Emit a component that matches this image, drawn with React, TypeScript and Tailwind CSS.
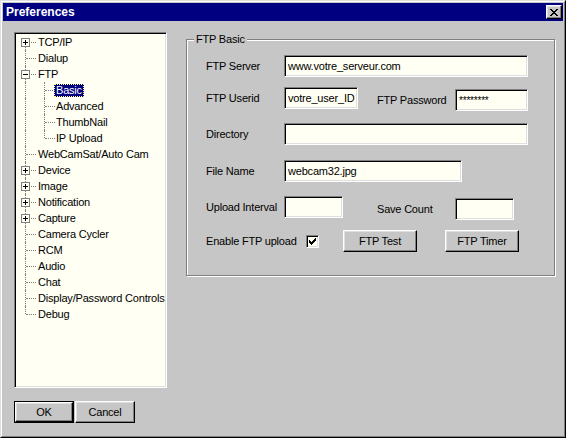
import React from 'react';

type TreeRow = {
  label: string;
  level: 0 | 1;
  box?: '+' | '-';
  first?: boolean;
  last?: boolean;
  lastChild?: boolean;
  selected?: boolean;
};

const rows: TreeRow[] = [
  { label: 'TCP/IP', level: 0, box: '+', first: true },
  { label: 'Dialup', level: 0 },
  { label: 'FTP', level: 0, box: '-' },
  { label: 'Basic', level: 1, selected: true },
  { label: 'Advanced', level: 1 },
  { label: 'ThumbNail', level: 1 },
  { label: 'IP Upload', level: 1, lastChild: true },
  { label: 'WebCamSat/Auto Cam', level: 0 },
  { label: 'Device', level: 0, box: '+' },
  { label: 'Image', level: 0, box: '+' },
  { label: 'Notification', level: 0, box: '+' },
  { label: 'Capture', level: 0, box: '+' },
  { label: 'Camera Cycler', level: 0 },
  { label: 'RCM', level: 0 },
  { label: 'Audio', level: 0 },
  { label: 'Chat', level: 0 },
  { label: 'Display/Password Controls', level: 0 },
  { label: 'Debug', level: 0, last: true },
];

const sunken =
  'border border-t-[#808080] border-l-[#808080] border-r-white border-b-white shadow-[inset_1px_1px_0_#000,inset_-1px_-1px_0_#dfdfdf] bg-[#fffff3]';

const raised =
  'border border-t-white border-l-white border-r-black border-b-black shadow-[inset_-1px_-1px_0_#808080,inset_1px_1px_0_#dfdfdf] bg-[#c6c6c6]';

function Row({ row }: { row: TreeRow }) {
  return (
    <div className={`relative h-[16px] flex items-center ${row.level === 0 ? 'pl-[20px]' : 'pl-[38px]'}`}>
      {/* trunk line */}
      {row.level === 0 ? (
        <span
          className={`absolute left-[9px] border-l border-dotted border-[#808080] ${
            row.first ? 'top-[8px] bottom-0' : row.last ? 'top-0 h-[8px]' : 'top-0 bottom-0'
          }`}
        />
      ) : (
        <span className="absolute left-[9px] top-0 bottom-0 border-l border-dotted border-[#808080]" />
      )}
      {row.level === 1 && (
        <span
          className={`absolute left-[28px] border-l border-dotted border-[#808080] ${
            row.lastChild ? 'top-0 h-[8px]' : 'top-0 bottom-0'
          }`}
        />
      )}
      {/* branch */}
      <span
        className={`absolute top-[8px] w-[10px] border-t border-dotted border-[#808080] ${
          row.level === 0 ? 'left-[10px]' : 'left-[29px]'
        }`}
      />
      {row.box && (
        <span className="absolute left-[5px] top-[4px] w-[9px] h-[9px] border border-[#808080] bg-[#fffff3] flex items-center justify-center">
          <span className="relative w-[5px] h-[5px]">
            <span className="absolute left-0 top-[2px] w-[5px] h-px bg-black" />
            {row.box === '+' && <span className="absolute left-[2px] top-0 w-px h-[5px] bg-black" />}
          </span>
        </span>
      )}
      <span
        className={`px-[2px] h-[13px] leading-[13px] whitespace-nowrap ${
          row.selected ? 'bg-[#000080] text-white outline outline-1 outline-dotted outline-[#ffff80] -outline-offset-1' : ''
        }`}
      >
        {row.label}
      </span>
    </div>
  );
}

function Field({ w, value, pad }: { w: string; value?: string; pad?: string }) {
  return (
    <div className={`${sunken} ${w} h-[22px] flex items-center pl-[3px] whitespace-nowrap overflow-hidden ${pad ?? ''}`}>
      {value}
    </div>
  );
}

function Button({ w, children, isDefault }: { w: string; children: React.ReactNode; isDefault?: boolean }) {
  if (isDefault) {
    return (
      <div className={`${w} h-[22px] border border-black flex`}>
        <div className={`${raised} flex-1 flex items-center justify-center`}>{children}</div>
      </div>
    );
  }
  return <div className={`${raised} ${w} h-[22px] flex items-center justify-center`}>{children}</div>;
}

export default function App() {
  return (
    <div className="w-[566px] h-[438px] border border-t-[#dfdfdf] border-l-[#dfdfdf] border-r-black border-b-black bg-[#c6c6c6] font-['Liberation_Sans',Arial,sans-serif] text-[11px] tracking-[-0.2px] text-black select-none">
      <div className="h-full border border-t-white border-l-white border-r-[#808080] border-b-[#808080] p-px flex flex-col">
        {/* caption */}
        <div className="h-[18px] bg-[#000080] flex items-center justify-between pl-[3px] pr-[1px]">
          <span className="text-white font-bold text-[12px] tracking-normal">Preferences</span>
          <div className={`${raised} w-[16px] h-[14px] flex items-center justify-center`}>
            <svg width="8" height="7" viewBox="0 0 8 7" shapeRendering="crispEdges">
              <path d="M0 0h2v1h1v1h2V1h1V0h2v1H7v1H6v1H5v1h1v1h1v1h1v1H6V6H5V5H3v1H2v1H0V6h1V5h1V4h1V3H2V2H1V1H0z" fill="#000" />
            </svg>
          </div>
        </div>

        <div className="flex-1 flex">
          {/* left column */}
          <div className="pl-[11px] pt-[11px] flex flex-col">
            <div className={`${sunken} w-[153px] h-[356px] p-px overflow-hidden`}>
              {rows.map((r) => (
                <Row key={r.label} row={r} />
              ))}
            </div>
            <div className="mt-[13px] flex gap-px">
              <Button w="w-[60px]" isDefault>
                OK
              </Button>
              <Button w="w-[60px]">Cancel</Button>
            </div>
          </div>

          {/* FTP Basic group */}
          <div className="ml-[19px] mt-[18px] relative w-[369px] h-[237px] border border-[#808080] shadow-[inset_1px_1px_0_#fff,1px_1px_0_#fff]">
            <span className="absolute left-[7px] -top-[8px] px-[2px] h-[14px] leading-[14px] bg-[#c6c6c6]">FTP Basic</span>

            <div className="pl-[19px] pt-[15px] flex flex-col">
              <div className="flex items-center h-[22px]">
                <span className="w-[78px]">FTP Server</span>
                <Field w="w-[244px]" value="www.votre_serveur.com" />
              </div>

              <div className="mt-[10px] flex items-start h-[24px]">
                <div className="flex items-center h-[22px]">
                  <span className="w-[78px]">FTP Userid</span>
                  <div className="w-[93px]">
                    <Field w="w-[74px]" value="votre_user_ID" />
                  </div>
                </div>
                <div className="mt-[2px] flex items-center h-[22px]">
                  <span className="w-[78px]">FTP Password</span>
                  <Field w="w-[73px]" value="********" pad="items-start pt-[3px] text-[10px]" />
                </div>
              </div>

              <div className="mt-[12px] flex items-center h-[22px]">
                <span className="w-[78px]">Directory</span>
                <Field w="w-[244px]" />
              </div>

              <div className="mt-[15px] flex items-center h-[22px]">
                <span className="w-[78px]">File Name</span>
                <Field w="w-[178px]" value="webcam32.jpg" />
              </div>

              <div className="mt-[14px] flex items-start h-[24px]">
                <div className="flex items-center h-[22px]">
                  <span className="w-[78px]">Upload Interval</span>
                  <div className="w-[93px]">
                    <Field w="w-[59px]" />
                  </div>
                </div>
                <div className="mt-[2px] flex items-center h-[22px]">
                  <span className="w-[78px]">Save Count</span>
                  <Field w="w-[59px]" />
                </div>
              </div>

              <div className="mt-[10px] flex items-center h-[22px]">
                <span className="w-[100px]">Enable FTP upload</span>
                <div className={`${sunken} w-[13px] h-[13px] flex items-center justify-center`}>
                  <svg width="7" height="7" viewBox="0 0 7 7" shapeRendering="crispEdges">
                    <path d="M6 0h1v3H6v1H5v1H4v1H3v1H2V6H1V5H0V2h1v1h1v1h1V3h1V2h1V1h1z" fill="#000" />
                  </svg>
                </div>
                <div className="ml-[24px]">
                  <Button w="w-[74px]">FTP Test</Button>
                </div>
                <div className="ml-[28px]">
                  <Button w="w-[74px]">FTP Timer</Button>
                </div>
              </div>
            </div>
          </div>
        </div>
      </div>
    </div>
  );
}
